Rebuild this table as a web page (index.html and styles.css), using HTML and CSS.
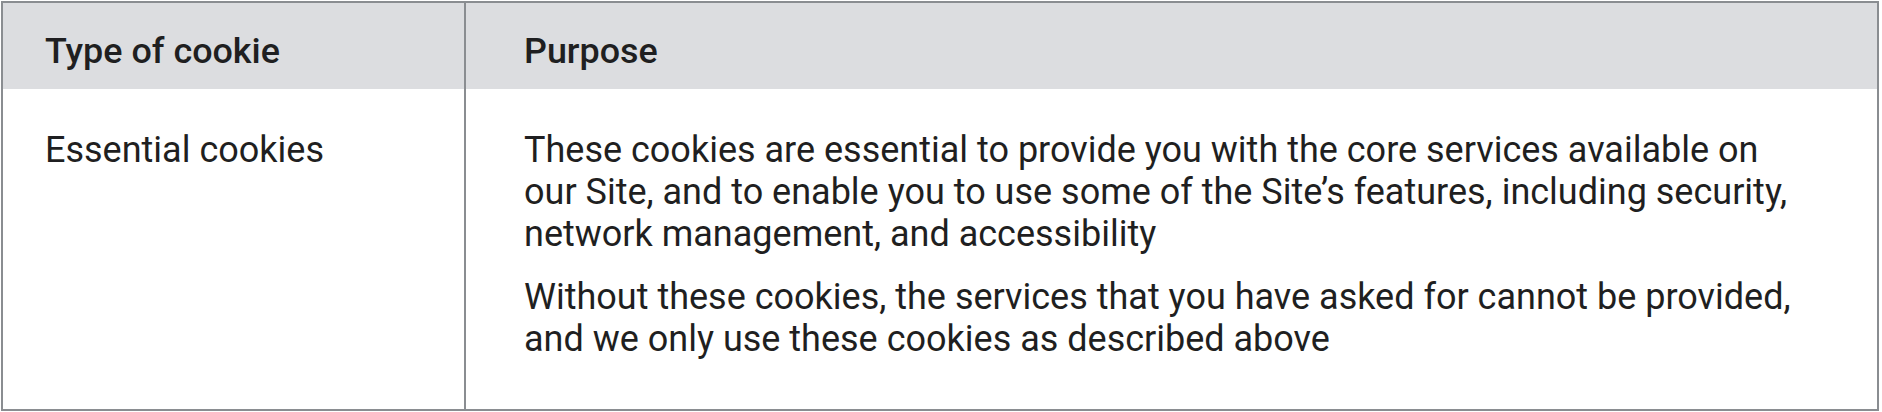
FILE: index.html
```html
<!DOCTYPE html>
<html lang="en">
<head>
<meta charset="utf-8">
<title>Cookie types</title>
<link rel="stylesheet" href="styles.css">
</head>
<body>
<div class="wrap">
  <table class="cookie-table">
    <thead>
      <tr>
        <th class="col-type">Type of cookie</th>
        <th class="col-purpose">Purpose</th>
      </tr>
    </thead>
    <tbody>
      <tr>
        <td class="col-type">Essential cookies</td>
        <td class="col-purpose">
          <p>These cookies are essential to provide you with the core services available on our Site, and to enable you to use some of the Site’s features, including security, network management, and accessibility</p>
          <p>Without these cookies, the services that you have asked for cannot be provided, and we only use these cookies as described above</p>
        </td>
      </tr>
    </tbody>
  </table>
</div>
</body>
</html>
```

FILE: styles.css
```css
html, body {
  margin: 0;
  padding: 0;
  background: #ffffff;
}

.wrap {
  padding: 1px;
}

.cookie-table {
  width: 1878px;
  height: 410px;
  box-sizing: border-box;
  table-layout: fixed;
  border-collapse: separate;
  border-spacing: 0;
  border: 2px solid #8a8d91;
  font-family: Roboto, "Liberation Sans", Arial, sans-serif;
  font-size: 36px;
  line-height: 42px;
  color: #1f1f21;
}

.cookie-table th,
.cookie-table td {
  box-sizing: border-box;
  text-align: left;
  vertical-align: top;
}

.cookie-table .col-type {
  width: 463px;
  border-right: 2px solid #8a8d91;
  padding-left: 42px;
}

.cookie-table .col-purpose {
  padding-left: 58px;
  padding-right: 75px;
}

.cookie-table thead th {
  background: #dcdde0;
  font-weight: 500;
  font-size: 35.9px;
  height: 86px;
  padding-top: 27px;
  padding-bottom: 17px;
}

.cookie-table tbody td {
  font-weight: 400;
  padding-top: 40px;
}

.cookie-table p {
  margin: 0 0 21px;
}
```
